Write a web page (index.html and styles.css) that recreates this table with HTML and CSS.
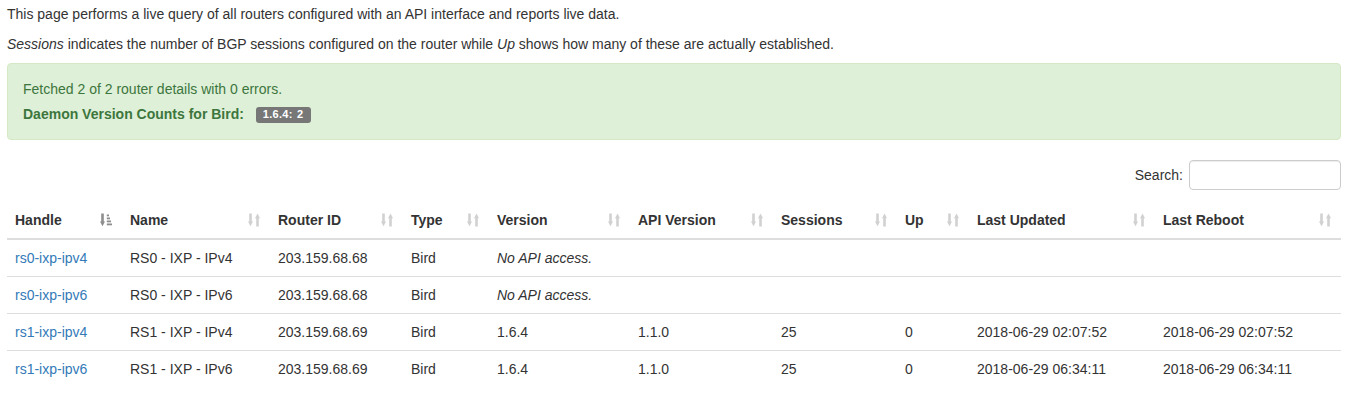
FILE: index.html
```html
<!DOCTYPE html>
<html lang="en">
<head>
  <meta charset="UTF-8" />
  <title>Route Servers - Live Status</title>
  <link rel="stylesheet" href="styles.css">
</head>
<body>
  <div class="container">
    <p>This page performs a live query of all routers configured with an API interface and reports live data.</p>
    <p><em>Sessions</em> indicates the number of BGP sessions configured on the router while <em>Up</em> shows how many of these are actually established.</p>

    <div class="alert alert--success">
      <p class="alert__line">Fetched 2 of 2 router details with 0 errors.</p>
      <p class="alert__line alert__line--last">
        <b>Daemon Version Counts for Bird:</b>
        <span class="label">1.6.4: 2</span>
      </p>
    </div>

    <div class="filter">
      <label class="filter__label">Search:</label>
      <input class="filter__input" type="search">
    </div>

    <table class="table">
      <colgroup>
        <col style="width: 115px">
        <col style="width: 148px">
        <col style="width: 133px">
        <col style="width: 86px">
        <col style="width: 141px">
        <col style="width: 143px">
        <col style="width: 124px">
        <col style="width: 72px">
        <col style="width: 186px">
        <col style="width: 186px">
      </colgroup>
      <thead>
        <tr>
          <th><div class="th">Handle <svg class="sort sort--active" viewBox="0 0 12 13"><rect x="1.2" y="0" width="2.6" height="9"/><polygon points="0,8 5,8 2.5,12.8"/><rect x="6.8" y="1" width="2.2" height="1.8"/><rect x="6.8" y="4" width="3.2" height="1.8"/><rect x="6.8" y="7" width="4.2" height="1.8"/><rect x="6.8" y="10" width="5.2" height="1.8"/></svg></div></th>
          <th><div class="th">Name <svg class="sort" viewBox="0 0 12 13"><rect x="1.2" y="0" width="2.6" height="9"/><polygon points="0,8 5,8 2.5,12.8"/><polygon points="7,4.8 12,4.8 9.5,0"/><rect x="8.2" y="4" width="2.6" height="9"/></svg></div></th>
          <th><div class="th">Router ID <svg class="sort" viewBox="0 0 12 13"><rect x="1.2" y="0" width="2.6" height="9"/><polygon points="0,8 5,8 2.5,12.8"/><polygon points="7,4.8 12,4.8 9.5,0"/><rect x="8.2" y="4" width="2.6" height="9"/></svg></div></th>
          <th><div class="th">Type <svg class="sort" viewBox="0 0 12 13"><rect x="1.2" y="0" width="2.6" height="9"/><polygon points="0,8 5,8 2.5,12.8"/><polygon points="7,4.8 12,4.8 9.5,0"/><rect x="8.2" y="4" width="2.6" height="9"/></svg></div></th>
          <th><div class="th">Version <svg class="sort" viewBox="0 0 12 13"><rect x="1.2" y="0" width="2.6" height="9"/><polygon points="0,8 5,8 2.5,12.8"/><polygon points="7,4.8 12,4.8 9.5,0"/><rect x="8.2" y="4" width="2.6" height="9"/></svg></div></th>
          <th><div class="th">API Version <svg class="sort" viewBox="0 0 12 13"><rect x="1.2" y="0" width="2.6" height="9"/><polygon points="0,8 5,8 2.5,12.8"/><polygon points="7,4.8 12,4.8 9.5,0"/><rect x="8.2" y="4" width="2.6" height="9"/></svg></div></th>
          <th><div class="th">Sessions <svg class="sort" viewBox="0 0 12 13"><rect x="1.2" y="0" width="2.6" height="9"/><polygon points="0,8 5,8 2.5,12.8"/><polygon points="7,4.8 12,4.8 9.5,0"/><rect x="8.2" y="4" width="2.6" height="9"/></svg></div></th>
          <th><div class="th">Up <svg class="sort" viewBox="0 0 12 13"><rect x="1.2" y="0" width="2.6" height="9"/><polygon points="0,8 5,8 2.5,12.8"/><polygon points="7,4.8 12,4.8 9.5,0"/><rect x="8.2" y="4" width="2.6" height="9"/></svg></div></th>
          <th><div class="th">Last Updated <svg class="sort" viewBox="0 0 12 13"><rect x="1.2" y="0" width="2.6" height="9"/><polygon points="0,8 5,8 2.5,12.8"/><polygon points="7,4.8 12,4.8 9.5,0"/><rect x="8.2" y="4" width="2.6" height="9"/></svg></div></th>
          <th><div class="th">Last Reboot <svg class="sort" viewBox="0 0 12 13"><rect x="1.2" y="0" width="2.6" height="9"/><polygon points="0,8 5,8 2.5,12.8"/><polygon points="7,4.8 12,4.8 9.5,0"/><rect x="8.2" y="4" width="2.6" height="9"/></svg></div></th>
        </tr>
      </thead>
      <tbody>
        <tr>
          <td><a href="#">rs0-ixp-ipv4</a></td>
          <td>RS0 - IXP - IPv4</td>
          <td>203.159.68.68</td>
          <td>Bird</td>
          <td><em>No API access.</em></td>
          <td></td><td></td><td></td><td></td><td></td>
        </tr>
        <tr>
          <td><a href="#">rs0-ixp-ipv6</a></td>
          <td>RS0 - IXP - IPv6</td>
          <td>203.159.68.68</td>
          <td>Bird</td>
          <td><em>No API access.</em></td>
          <td></td><td></td><td></td><td></td><td></td>
        </tr>
        <tr>
          <td><a href="#">rs1-ixp-ipv4</a></td>
          <td>RS1 - IXP - IPv4</td>
          <td>203.159.68.69</td>
          <td>Bird</td>
          <td>1.6.4</td>
          <td>1.1.0</td>
          <td>25</td>
          <td>0</td>
          <td>2018-06-29 02:07:52</td>
          <td>2018-06-29 02:07:52</td>
        </tr>
        <tr>
          <td><a href="#">rs1-ixp-ipv6</a></td>
          <td>RS1 - IXP - IPv6</td>
          <td>203.159.68.69</td>
          <td>Bird</td>
          <td>1.6.4</td>
          <td>1.1.0</td>
          <td>25</td>
          <td>0</td>
          <td>2018-06-29 06:34:11</td>
          <td>2018-06-29 06:34:11</td>
        </tr>
      </tbody>
    </table>
  </div>
</body>
</html>
```

FILE: styles.css
```css
* {
  box-sizing: border-box;
}
body {
  margin: 0;
  font-family: "Liberation Sans", Arial, sans-serif;
  font-size: 14px;
  line-height: 20px;
  color: #333;
  background: #fff;
}
.container {
  padding: 4px 18px 0 7px;
}
p {
  margin: 0 0 10px;
}
a {
  color: #337ab7;
  text-decoration: none;
}
.alert {
  margin-top: -1px;
  margin-bottom: 20px;
  padding: 15px;
  border: 1px solid transparent;
  border-radius: 4px;
}
.alert--success {
  background: #dff0d8;
  border-color: #d6e9c6;
  color: #3c763d;
}
.alert__line {
  margin: 0 0 5px;
}
.alert__line--last {
  margin-bottom: 0;
}
.label {
  display: inline-block;
  margin-left: 8px;
  padding: 1px 7px 2px;
  font-size: 11px;
  font-weight: bold;
  line-height: 13px;
  letter-spacing: 0.3px;
  word-spacing: 1px;
  color: #fff;
  background: #777;
  border-radius: 3px;
  vertical-align: 1px;
}
.filter {
  display: flex;
  justify-content: flex-end;
  align-items: center;
  height: 30px;
  margin-bottom: 12px;
}
.filter__label {
  margin-right: 6px;
}
.filter__input {
  width: 152px;
  height: 30px;
  border: 1px solid #ccc;
  border-radius: 4px;
  box-shadow: inset 0 1px 1px rgba(0, 0, 0, 0.075);
  font: inherit;
  padding: 5px 10px;
}
.table {
  width: 100%;
  table-layout: fixed;
  border-collapse: collapse;
  border-spacing: 0;
}
.table th,
.table td {
  padding: 8px;
  text-align: left;
  vertical-align: top;
  white-space: nowrap;
}
.table th {
  font-weight: bold;
  border-bottom: 2px solid #ddd;
}
.table td {
  border-top: 1px solid #ddd;
}
.th {
  display: flex;
  justify-content: space-between;
  align-items: center;
}
.sort {
  width: 12px;
  height: 14px;
  margin-right: 2px;
  fill: #333;
  opacity: 0.22;
}
.sort--active {
  opacity: 0.55;
}
```
